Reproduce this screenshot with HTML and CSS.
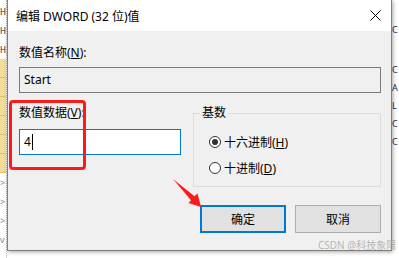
FILE: index.html
```html
<!DOCTYPE html>
<html lang="zh-CN">
<head>
<meta charset="UTF-8">
<title>编辑 DWORD (32 位)值</title>
<link rel="stylesheet" href="styles.css">
</head>
<body>
<div class="screen">

<div class="tree-left">
<div class="tl-row tl-text">H</div>
<div class="tl-row tl-text">H</div>
<div class="tl-row tl-text">H</div>
<div class="tl-row tl-folder"></div>
<div class="tl-row tl-folder"></div>
<div class="tl-row tl-folder"></div>
<div class="tl-row tl-folder"></div>
<div class="tl-row tl-folder"></div>
<div class="tl-row tl-folder"></div>
<div class="tl-row tl-chev">&gt;</div>
<div class="tl-row tl-chev">&gt;</div>
<div class="tl-row tl-chev">&gt;</div>
<div class="tl-row tl-chev">v</div>
</div>

<div class="dialog">
<div class="titlebar">
<span class="title">编辑 DWORD (32 位)值</span>
<svg class="close" width="11" height="11" viewBox="0 0 11 11"><path d="M0.5 0.5L10.5 10.5M10.5 0.5L0.5 10.5" stroke="#000" stroke-width="1"/></svg>
</div>
<div class="dlg-body">
<div class="field-label">数值名称(<u>N</u>):</div>
<div class="textbox readonly">Start</div>

<div class="lower">
<div class="data-col">
<div class="field-label">数值数据(<u>V</u>):</div>
<div class="textbox active">4<span class="caret"></span></div>
</div>
<fieldset class="base">
<legend>基数</legend>
<div class="radio"><span class="circle checked"></span>十六进制(<u>H</u>)</div>
<div class="radio"><span class="circle"></span>十进制(<u>D</u>)</div>
</fieldset>
</div>

<div class="buttons">
<button class="btn default">确定</button>
<button class="btn">取消</button>
</div>
</div>
</div>

<div class="tree-right">
<div class="tr-row">C</div>
<div class="tr-row tr-gap">C</div>
<div class="tr-row">A</div>
<div class="tr-row">L</div>
<div class="tr-row">C</div>
<div class="tr-row">C</div>
</div>

<!-- annotations drawn over the screenshot -->
<div class="mark-box"></div>
<svg class="mark-arrow" width="399" height="258" viewBox="0 0 399 258">
<polygon points="173,179 194.5,196.2 197.5,193.5 201,207 188.5,203 191,200.2" fill="#ff1a1a"/>
</svg>
<div class="watermark">CSDN @科技象限</div>

</div>
</body>
</html>
```

FILE: styles.css
```css
body {
margin: 0;
font-family: "Noto Sans", "Noto Sans CJK SC", sans-serif;
font-size: 12px;
color: #000;
background: #fff;
overflow: hidden;
}
.screen {
position: relative;
display: flex;
width: 399px;
height: 258px;
overflow: hidden;
background: #fff;
}
.tree-left {
width: 7px;
flex: none;
border-right: 1px dotted #bbb;
box-sizing: border-box;
padding-top: 2px;
}
.tl-row {
height: 19px;
line-height: 19px;
font-size: 8px;
}
.tl-text {
color: #222;
}
.tl-folder {
background: #f3dc98;
border-bottom: 1px solid #e0c26e;
box-sizing: border-box;
}
.tl-chev {
color: #888;
font-size: 9px;
}
.dialog {
width: 385px;
height: 251px;
flex: none;
box-sizing: border-box;
background: #f0f0f0;
border: 1px solid #7f7f7f;
border-top: none;
box-shadow: 1px 1px 4px rgba(0,0,0,0.35);
z-index: 1;
}
.titlebar {
height: 31px;
background: #fff;
display: flex;
align-items: center;
justify-content: space-between;
padding: 0 10px 0 8px;
}
.title {
font-size: 12px;
}
.close {
display: block;
}
.dlg-body {
padding: 14px 10px 0 11px;
}
.field-label {
line-height: 16px;
height: 16px;
}
.field-label u {
text-underline-offset: 1px;
}
.textbox {
height: 26px;
box-sizing: border-box;
line-height: 24px;
padding: 0 4px;
margin-top: 6px;
border: 1px solid #7a7a7a;
}
.readonly {
background: #f0f0f0;
}
.lower {
display: flex;
margin-top: 12px;
}
.data-col {
width: 174px;
flex: none;
}
.active {
width: 162px;
margin-top: 8px;
background: #fff;
border-color: #0078d7;
display: flex;
align-items: center;
}
.caret {
display: inline-block;
width: 1px;
height: 16px;
background: #000;
margin-left: 1px;
}
.base {
margin: 0;
width: 188px;
box-sizing: border-box;
padding: 8px 0 5px 6px;
border: 1px solid #dcdcdc;
}
.base legend {
padding: 0 2px;
line-height: 16px;
}
.radio {
height: 26px;
display: flex;
align-items: center;
margin-left: 9px;
}
.circle {
width: 12px;
height: 12px;
box-sizing: border-box;
border: 1px solid #333;
border-radius: 50%;
background: #fff;
margin-right: 3px;
display: flex;
align-items: center;
justify-content: center;
}
.circle.checked::after {
content: "";
width: 6px;
height: 6px;
border-radius: 50%;
background: #333;
}
.buttons {
display: flex;
justify-content: flex-end;
gap: 9px;
margin-top: 18px;
}
.btn {
font-family: inherit;
font-size: 12px;
width: 86px;
height: 28px;
box-sizing: border-box;
background: #e1e1e1;
border: 1px solid #adadad;
color: #000;
padding: 0;
}
.btn.default {
border: 2px solid #0078d7;
}
.tree-right {
flex: 1;
padding-top: 21px;
}
.tr-row {
height: 18px;
line-height: 18px;
font-size: 9px;
color: #1c2a5a;
}
.tr-gap {
margin-top: 22px;
}
.mark-box {
position: absolute;
left: 9px;
top: 100px;
width: 77px;
height: 70px;
box-sizing: border-box;
border: 3px solid #ff1a1a;
border-radius: 4px;
z-index: 2;
}
.mark-arrow {
position: absolute;
left: 0;
top: 0;
z-index: 2;
pointer-events: none;
}
.watermark {
position: absolute;
left: 318px;
top: 239px;
font-size: 10px;
line-height: 13px;
color: rgba(160,160,160,0.75);
z-index: 3;
white-space: nowrap;
}
```
